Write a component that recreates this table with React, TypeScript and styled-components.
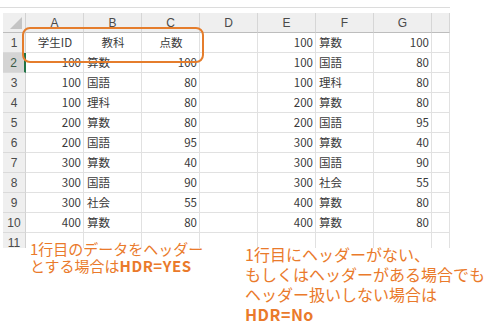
import React from "react";
import styled, { createGlobalStyle } from "styled-components";

const Global = createGlobalStyle`
  html, body { margin: 0; padding: 0; background: #ffffff; }
  body { font-family: "Noto Sans CJK JP", "Noto Sans", sans-serif; }
`;

const COLS = ["A", "B", "C", "D", "E", "F", "G", ""];

type Cell = { v: string; align?: "left" | "right" | "center" };
const L = (v: string): Cell => ({ v, align: "left" });
const R = (v: string): Cell => ({ v, align: "right" });
const C = (v: string): Cell => ({ v, align: "center" });
const E: Cell = { v: "" };

const ROWS: Cell[][] = [
  [C("学生ID"), C("教科"), C("点数"), E, R("100"), L("算数"), R("100"), E],
  [R("100"), L("算数"), R("100"), E, R("100"), L("国語"), R("80"), E],
  [R("100"), L("国語"), R("80"), E, R("100"), L("理科"), R("80"), E],
  [R("100"), L("理科"), R("80"), E, R("200"), L("算数"), R("80"), E],
  [R("200"), L("算数"), R("80"), E, R("200"), L("国語"), R("95"), E],
  [R("200"), L("国語"), R("95"), E, R("300"), L("算数"), R("40"), E],
  [R("300"), L("算数"), R("40"), E, R("300"), L("国語"), R("90"), E],
  [R("300"), L("国語"), R("90"), E, R("300"), L("社会"), R("55"), E],
  [R("300"), L("社会"), R("55"), E, R("400"), L("算数"), R("80"), E],
  [R("400"), L("算数"), R("80"), E, R("400"), L("算数"), R("80"), E],
  [E, E, E, E, E, E, E, E],
];

const Page = styled.div`
  position: relative;
  width: 492px;
  height: 331px;
  overflow: hidden;
  background: #ffffff;
`;

const TopRule = styled.div`
  height: 7px;
  border-bottom: 1px solid #dcdcdc;
  width: 450px;
`;

const Sheet = styled.div`
  margin: 5px 0 0 3px;
  display: grid;
  grid-template-columns: 23px repeat(7, 58px) 18px;
  grid-auto-rows: 20px;
  width: 447px;
  height: 235px;
  overflow: hidden;
  font-size: 11.5px;
  color: #3a3a3a;
`;

const Corner = styled.div`
  position: relative;
  background: #efefef;
  border-right: 1px solid #d2d2d2;
  border-bottom: 1px solid #bdbdbd;
  box-sizing: border-box;
  &::after {
    content: "";
    position: absolute;
    right: 3px;
    bottom: 3px;
    width: 0;
    height: 0;
    border-left: 12px solid transparent;
    border-bottom: 12px solid #c4c4c4;
  }
`;

const ColHead = styled.div`
  box-sizing: border-box;
  background: #efefef;
  border-right: 1px solid #d6d6d6;
  border-bottom: 1px solid #bdbdbd;
  display: flex;
  align-items: center;
  justify-content: center;
  color: #4a4a4a;
  font-family: "Liberation Sans", "Noto Sans CJK JP", sans-serif;
  font-size: 12px;
`;

const RowHead = styled.div<{ $selected?: boolean }>`
  box-sizing: border-box;
  background: ${(p) => (p.$selected ? "#d4d4d4" : "#efefef")};
  border-right: ${(p) => (p.$selected ? "2px solid #217346" : "1px solid #d2d2d2")};
  border-bottom: 1px solid #dadada;
  display: flex;
  align-items: center;
  justify-content: center;
  color: ${(p) => (p.$selected ? "#3b5a46" : "#4a4a4a")};
  font-family: "Liberation Sans", "Noto Sans CJK JP", sans-serif;
  font-size: 12px;
`;

const DataCell = styled.div<{ $align?: "left" | "right" | "center" }>`
  box-sizing: border-box;
  border-right: 1px solid #e1e1e1;
  border-bottom: 1px solid #e1e1e1;
  display: flex;
  align-items: center;
  justify-content: ${(p) =>
    p.$align === "right" ? "flex-end" : p.$align === "center" ? "center" : "flex-start"};
  padding: 0 2px 0 3px;
  white-space: nowrap;
  overflow: hidden;
  line-height: 1;
`;

const HeaderBox = styled.div`
  position: absolute;
  left: 22px;
  top: 27px;
  width: 182px;
  height: 36px;
  box-sizing: border-box;
  border: 2px solid #e57d2c;
  border-radius: 8px;
  pointer-events: none;
`;

const Note = styled.div<{ $size: number; $lh: number }>`
  position: absolute;
  color: #ea7a2b;
  font-family: "Noto Sans CJK JP", sans-serif;
  font-size: ${(p) => p.$size}px;
  line-height: ${(p) => p.$lh}px;
  white-space: nowrap;
`;

const NoteLeft = styled(Note)`
  left: 30px;
  top: 240px;
`;

const NoteRight = styled(Note)`
  left: 245px;
  top: 244px;
`;

const Strong = styled.span`
  font-weight: 700;
  letter-spacing: 0.5px;
`;

const Line = styled.div``;

export default function App() {
  return (
    <Page>
      <Global />
      <TopRule />
      <Sheet>
        <Corner />
        {COLS.map((c, i) => (
          <ColHead key={"h" + i}>{c}</ColHead>
        ))}
        {ROWS.map((row, r) => (
          <React.Fragment key={"r" + r}>
            <RowHead $selected={r === 1}>{r + 1}</RowHead>
            {row.map((cell, ci) => (
              <DataCell key={ci} $align={cell.align}>
                {cell.v}
              </DataCell>
            ))}
          </React.Fragment>
        ))}
      </Sheet>
      <HeaderBox />
      <NoteLeft $size={15} $lh={17}>
        <Line>1行目のデータをヘッダー</Line>
        <Line>
          とする場合は<Strong>HDR=YES</Strong>
        </Line>
      </NoteLeft>
      <NoteRight $size={16} $lh={20}>
        <Line>1行目にヘッダーがない、</Line>
        <Line>もしくはヘッダーがある場合でも</Line>
        <Line>ヘッダー扱いしない場合は</Line>
        <Line>
          <Strong>HDR=No</Strong>
        </Line>
      </NoteRight>
    </Page>
  );
}
